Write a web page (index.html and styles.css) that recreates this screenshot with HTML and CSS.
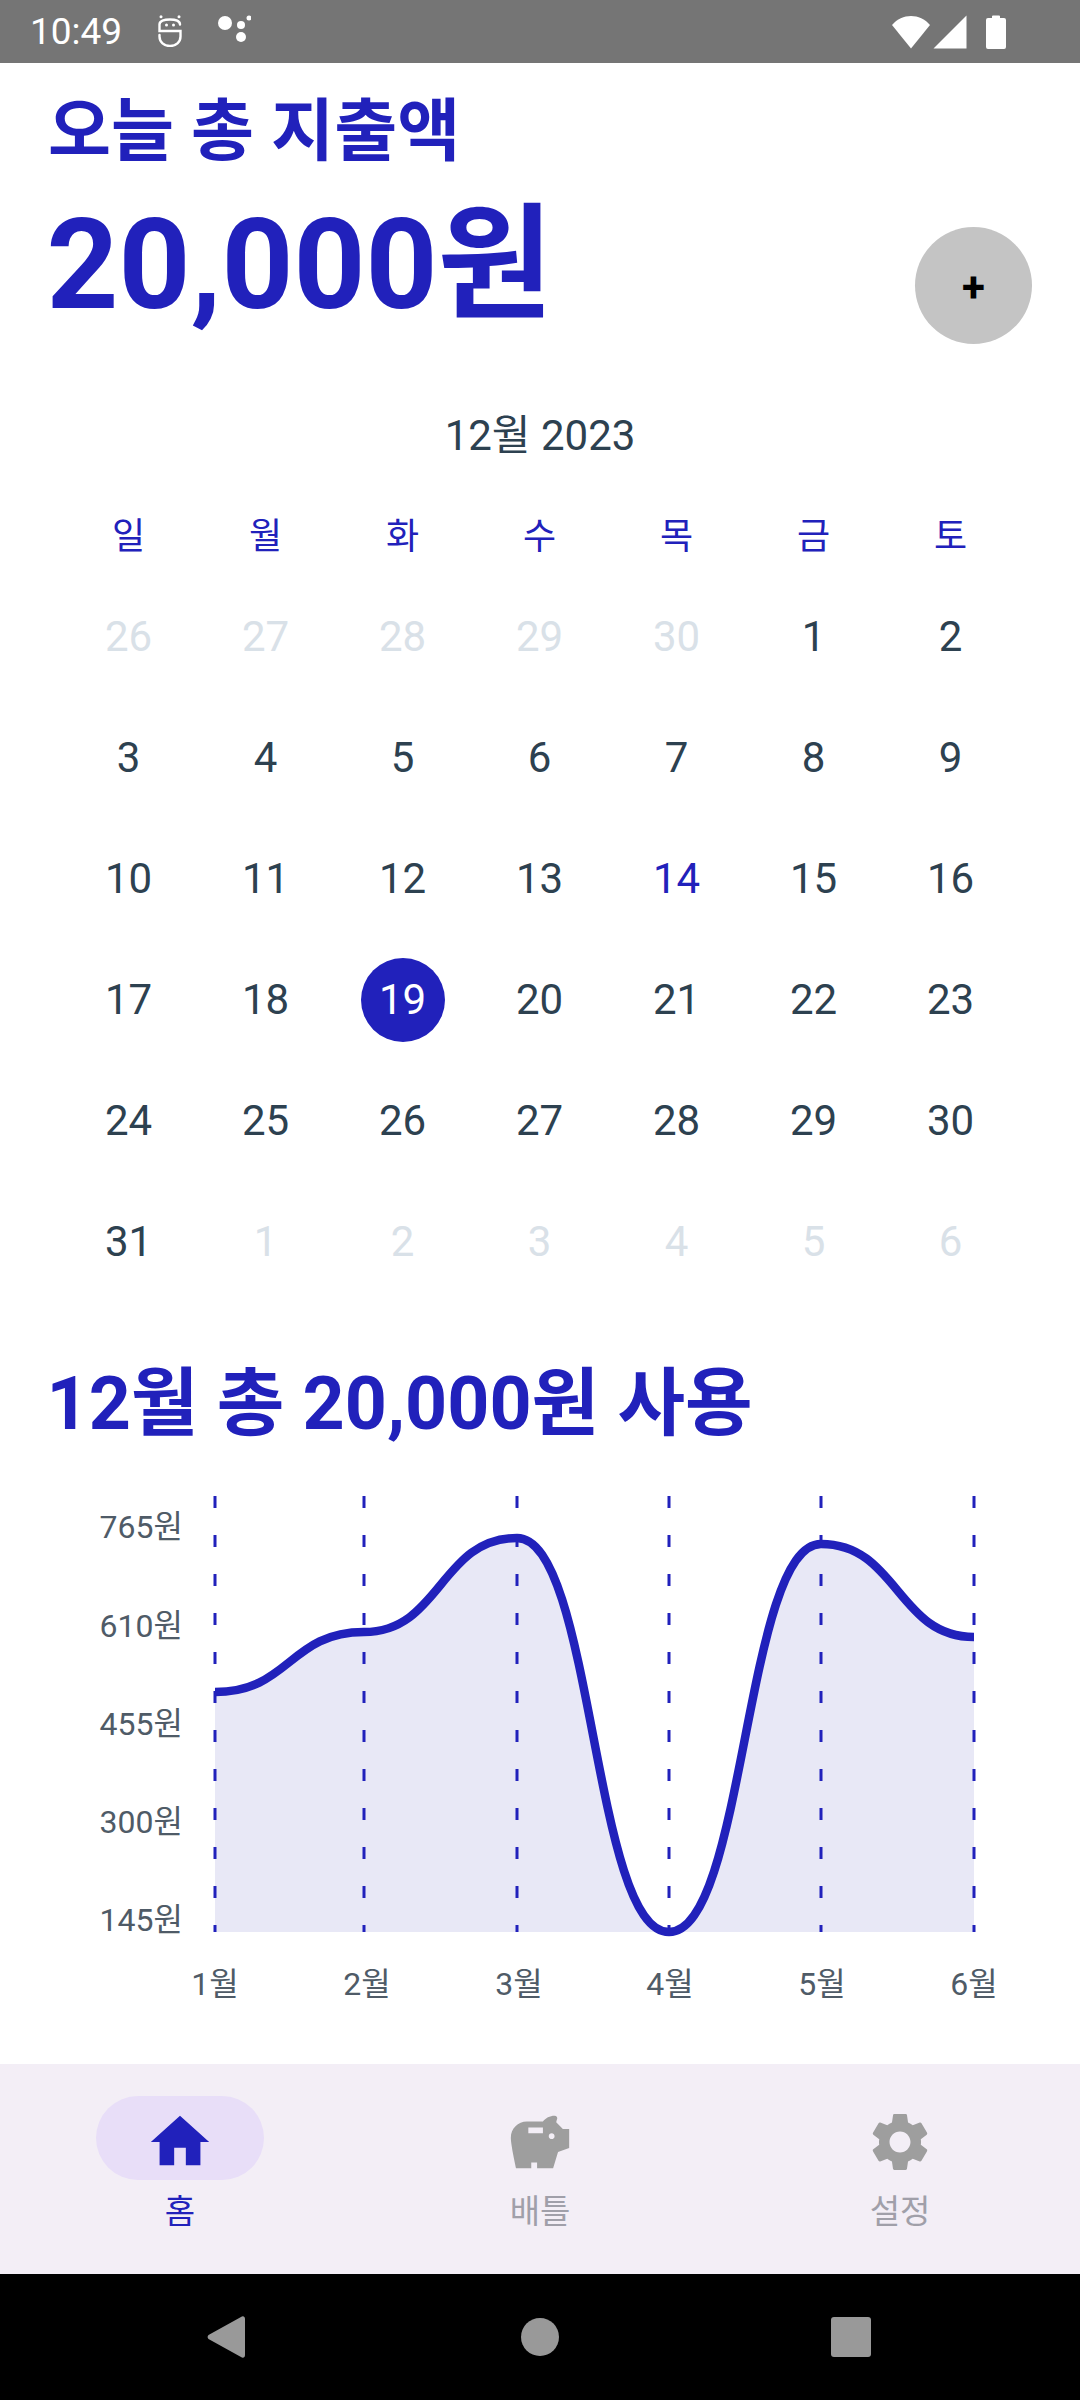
FILE: index.html
```html
<!DOCTYPE html>
<html lang="ko">
<head>
<meta charset="utf-8">
<title>오늘 총 지출액</title>
<link rel="stylesheet" href="styles.css">
</head>
<body>
<div class="app">
  <header class="status">
    <span class="time">10:49</span>
    <svg class="st-robot" viewBox="0 0 26 32"><path fill="none" stroke="#fff" stroke-width="2.400" stroke-linecap="round" d="M23 9.500C23 6 19 4.500 13 4.500S2.500 6 2.500 9.500V16H23.500V21.500C23.500 27 19 31 13 31S2.500 27 2.500 21.500V20"/><circle cx="9.500" cy="10" r="1.500" fill="#fff"/><circle cx="16.500" cy="10" r="1.500" fill="#fff"/><circle cx="4" cy="1.800" r="1.500" fill="#fff"/><circle cx="22" cy="1.800" r="1.500" fill="#fff"/></svg>
    <svg class="st-dots" viewBox="0 0 34 32" fill="#fff"><circle cx="8" cy="9" r="7"/><circle cx="24" cy="11" r="4"/><circle cx="24" cy="23" r="5"/><circle cx="32" cy="4" r="2.500"/></svg>
    <span class="st-space"></span>
    <svg class="st-wifi" viewBox="0 0 40 34" fill="#fff"><path d="M20 33.500 1 10C6 4 13 1 20 1s14 3 19 9z"/></svg>
    <svg class="st-signal" viewBox="0 0 34 34" fill="#fff"><path d="M33.500 .5V33.500H.5z"/></svg>
    <svg class="st-battery" viewBox="0 0 20 35" fill="#fff"><path d="M6 2.500a1 1 0 0 1 1-1h6a1 1 0 0 1 1 1V4h4a2 2 0 0 1 2 2v27a2 2 0 0 1-2 2H2a2 2 0 0 1-2-2V6a2 2 0 0 1 2-2h4z"/></svg>
  </header>

  <main class="content">
    <section class="summary">
      <div class="summary-text">
        <h1 class="today-label">오늘 총 지출액</h1>
        <p class="today-amount">20,000원</p>
      </div>
      <button class="fab" type="button">+</button>
    </section>

    <section class="calendar">
      <div class="month">12월 2023</div>
      <div class="weekdays">
        <span>일</span><span>월</span><span>화</span><span>수</span><span>목</span><span>금</span><span>토</span>
      </div>
      <div class="days">
        <span class="day off">26</span><span class="day off">27</span><span class="day off">28</span><span class="day off">29</span><span class="day off">30</span><span class="day">1</span><span class="day">2</span>
        <span class="day">3</span><span class="day">4</span><span class="day">5</span><span class="day">6</span><span class="day">7</span><span class="day">8</span><span class="day">9</span>
        <span class="day">10</span><span class="day">11</span><span class="day">12</span><span class="day">13</span><span class="day today">14</span><span class="day">15</span><span class="day">16</span>
        <span class="day">17</span><span class="day">18</span><span class="day"><b class="selected">19</b></span><span class="day">20</span><span class="day">21</span><span class="day">22</span><span class="day">23</span>
        <span class="day">24</span><span class="day">25</span><span class="day">26</span><span class="day">27</span><span class="day">28</span><span class="day">29</span><span class="day">30</span>
        <span class="day">31</span><span class="day off">1</span><span class="day off">2</span><span class="day off">3</span><span class="day off">4</span><span class="day off">5</span><span class="day off">6</span>
      </div>
    </section>

    <h2 class="month-total">12월 총 20,000원 사용</h2>

    <svg class="chart" viewBox="0 0 1080 530">
      <path class="area" d="M215 212C289.500 212 289.500 152 364 152C440.500 152 440.500 58 517 58C593 58 593 452 669 452C745 452 745 64 821 64C897.500 64 897.500 157 974 157V452H215Z"/>
      <g class="grid">
        <path d="M215 16V452"/><path d="M364 16V452"/><path d="M517 16V452"/><path d="M669 16V452"/><path d="M821 16V452"/><path d="M974 16V452"/>
      </g>
      <path class="line" d="M215 212C289.500 212 289.500 152 364 152C440.500 152 440.500 58 517 58C593 58 593 452 669 452C745 452 745 64 821 64C897.500 64 897.500 157 974 157"/>
      <g class="ylabels">
        <text x="183" y="58">765원</text><text x="183" y="157">610원</text><text x="183" y="255">455원</text><text x="183" y="353">300원</text><text x="183" y="451">145원</text>
      </g>
      <g class="xlabels">
        <text x="215" y="515">1월</text><text x="367" y="515">2월</text><text x="519" y="515">3월</text><text x="670" y="515">4월</text><text x="822" y="515">5월</text><text x="974" y="515">6월</text>
      </g>
    </svg>
  </main>

  <nav class="tabs">
    <div class="tab active">
      <span class="pill"><svg class="tab-icon" viewBox="0 0 24 24"><path d="M10 20v-6h4v6h5v-8h3L12 3 2 12h3v8z"/></svg></span>
      <span class="tab-label">홈</span>
    </div>
    <div class="tab">
      <span class="pill"><svg class="tab-icon" viewBox="0 0 24 24"><path d="M19.830 7.500l-2.270-2.270c.07-.42.18-.81.32-1.150C18.040 3.740 17.770 3 17 3c-1.640 0-3.090.79-4 2H7.500C4.460 5 2 7.460 2 10.500c0 2.500 1.790 10.500 1.790 10.500H9v-2h2v2h5.500l1.680-5.590L22 14.080V7.500h-2.170zM13 9H8V7h5v2zm3 2c-.55 0-1-.45-1-1s.45-1 1-1 1 .45 1 1-.45 1-1 1z"/></svg></span>
      <span class="tab-label">배틀</span>
    </div>
    <div class="tab">
      <span class="pill"><svg class="tab-icon" viewBox="0 0 24 24"><path d="M19.140 12.940c.04-.3.06-.61.06-.94 0-.32-.02-.64-.07-.94l2.030-1.580c.18-.14.23-.41.12-.61l-1.920-3.320c-.12-.22-.37-.29-.59-.22l-2.390.96c-.5-.38-1.030-.7-1.620-.94l-.36-2.540c-.04-.24-.24-.41-.48-.41h-3.840c-.24 0-.43.17-.47.41l-.36 2.540c-.59.24-1.130.57-1.620.94l-2.390-.96c-.22-.08-.47 0-.59.22L2.740 8.870c-.12.21-.08.47.12.61l2.030 1.580c-.05.3-.09.63-.09.94s.02.64.07.94l-2.030 1.580c-.18.14-.23.41-.12.61l1.920 3.320c.12.22.37.29.59.22l2.390-.96c.5.38 1.030.7 1.620.94l.36 2.540c.05.24.24.41.48.41h3.840c.24 0 .44-.17.47-.41l.36-2.540c.59-.24 1.130-.56 1.620-.94l2.390.96c.22.08.47 0 .59-.22l1.920-3.320c.12-.22.07-.47-.12-.61l-2.010-1.580zM12 15.600c-1.980 0-3.600-1.620-3.600-3.600s1.620-3.600 3.600-3.600 3.600 1.620 3.600 3.600-1.620 3.600-3.600 3.600z"/></svg></span>
      <span class="tab-label">설정</span>
    </div>
  </nav>

  <footer class="sysnav">
    <svg class="sys-back" viewBox="0 0 38 42"><path d="M1.500 23a3 3 0 0 1 0-4L34 1c2-1.500 4-.5 4 2v36c0 2.500-2 3.500-4 2z"/></svg>
    <span class="sys-home"></span>
    <span class="sys-recent"></span>
  </footer>
</div>
</body>
</html>
```

FILE: styles.css
```css
* { box-sizing: border-box; }
html, body { margin: 0; padding: 0; }
body { background: #fff; font-family: Roboto, "Noto Sans CJK KR", sans-serif; }
.app { width: 1080px; height: 2400px; display: flex; flex-direction: column; overflow: hidden; }

.status { height: 63px; flex: none; background: #757575; display: flex; align-items: center; padding: 0 74px 0 30px; color: #fff; }
.time { font-size: 37px; line-height: 63px; width: 127px; }
.st-robot { width: 26px; height: 32px; margin-top: -1px; }
.st-dots { width: 34px; height: 32px; margin-left: 34px; margin-top: -3px; }
.st-space { flex: 1; }
.st-wifi { width: 40px; height: 34px; }
.st-signal { width: 34px; height: 34px; margin-left: 2px; }
.st-battery { width: 20px; height: 35px; margin-left: 19px; }

.content { flex: 1; min-height: 0; }

.summary { display: flex; justify-content: space-between; padding: 27px 48px 0; height: 348px; }
.today-label { margin: 0; font-size: 68.500px; line-height: 84px; font-weight: 700; color: #2121bb; }
.today-amount { margin: 17px 0 0 -1.500px; font-size: 125.500px; line-height: 150px; font-weight: 700; color: #2121bb; }
.fab { width: 117px; height: 117px; margin-top: 137px; border: 0; padding: 5px 0 0; border-radius: 50%; background: #c4c4c4; color: #000; font: 700 42px/112px Roboto, sans-serif; }

.calendar { padding: 0 60px; }
.month { text-align: center; font-size: 42px; line-height: 50px; font-weight: 400; color: #2d4150; }
.weekdays, .days { display: grid; grid-template-columns: repeat(7, 137px); justify-items: center; }
.weekdays { margin-top: 51px; height: 50px; font-size: 36px; line-height: 50px; color: #2121bb; }
.days { margin-top: 14px; grid-auto-rows: 121px; font-size: 42px; color: #2d4150; }
.day { display: flex; align-items: center; justify-content: center; width: 84px; font-weight: 400; }
.off { color: #d9e1e8; }
.today { color: #2121bb; }
.selected { display: flex; align-items: center; justify-content: center; width: 84px; height: 84px; border-radius: 50%; background: #2121bb; color: #fff; font-weight: 400; }

.month-total { margin: 57px 0 0 -1.500px; padding-left: 48px; font-size: 73.500px; line-height: 90px; font-weight: 700; color: #2121bb; }

.chart { display: block; width: 1080px; height: 530px; margin-top: 31px; }
.area { fill: #e8e8f6; }
.grid path { fill: none; stroke: #2121bb; stroke-width: 3; stroke-dasharray: 12 27; }
.line { fill: none; stroke: #2121bb; stroke-width: 8.500; }
.ylabels text, .xlabels text { font-size: 32px; fill: #4f5b67; }
.ylabels text { text-anchor: end; }
.xlabels text { text-anchor: middle; }

.tabs { height: 210px; flex: none; background: #f3eef6; display: grid; grid-template-columns: 360px 360px 360px; }
.tab { display: flex; flex-direction: column; align-items: center; padding-top: 32px; color: #a09fa9; }
.pill { width: 168px; height: 84px; border-radius: 42px; display: flex; align-items: center; justify-content: center; }
.tab-icon { width: 70px; height: 70px; fill: #9e9e9e; position: relative; top: 4px; }
.tab.active { color: #2121bb; }
.tab.active .pill { background: #e8def8; }
.tab.active .tab-icon { fill: #2121bb; }
.tab-label { font-size: 33px; line-height: 50px; margin-top: 7px; }

.sysnav { height: 126px; flex: none; background: #000; position: relative; }
.sys-back { position: absolute; left: 207px; top: 42px; width: 38px; height: 42px; fill: #999; }
.sys-home { position: absolute; left: 521px; top: 44px; width: 38px; height: 38px; border-radius: 50%; background: #999; }
.sys-recent { position: absolute; left: 831px; top: 43px; width: 40px; height: 40px; border-radius: 3px; background: #999; }
```
